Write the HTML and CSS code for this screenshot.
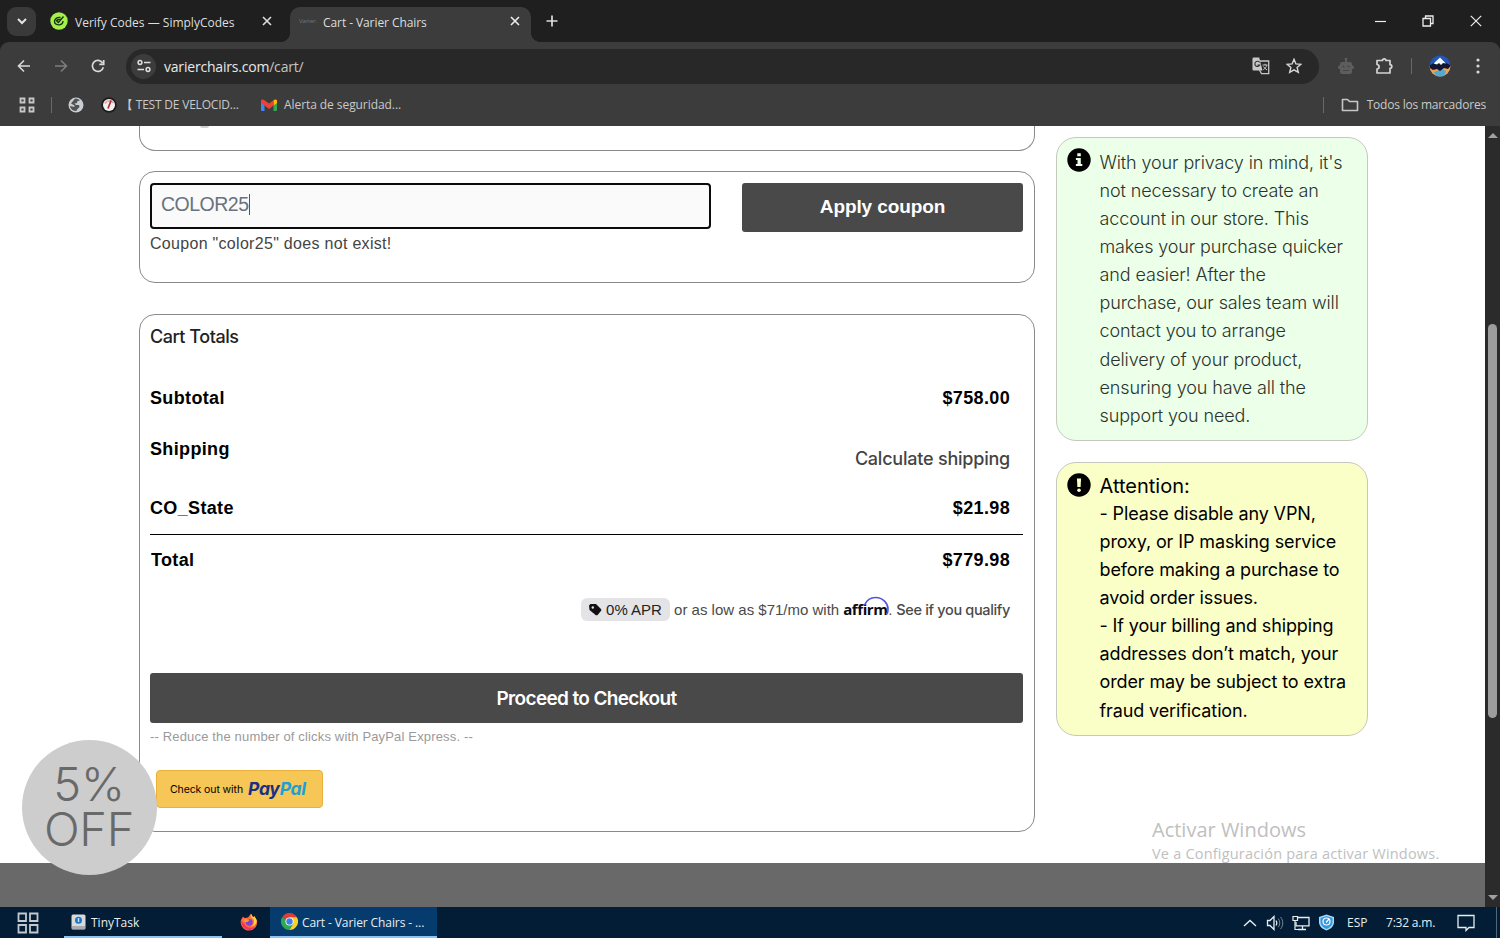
FILE: index.html
```html
<!DOCTYPE html>
<html lang="es">
<head>
  <meta charset="UTF-8" />
  <meta name="viewport" content="width=device-width, initial-scale=1" />
  <title>Cart - Varier Chairs</title>
  <link rel="stylesheet" href="styles.css">
</head>
<body>
  <!-- Tabs -->
  <div class="tab-strip">
    <button class="tab-search"><svg width="12" height="12" viewBox="0 0 12 12"><path d="M2 4l4 4 4-4" fill="none" stroke="#e3e3e3" stroke-width="2"/></svg></button>
    <div class="tab">
      <svg class="favicon-simply" width="18" height="18" viewBox="0 0 18 18"><circle cx="9" cy="9" r="8.7" fill="#a6f04a"/><path d="M10.500 5.500C7 5 4.500 7 4.500 9.500s2.500 3.500 5 3.300c2-.3 3.500-1.800 3.500-3.800M6.500 9.500c0-1.500 2-2.500 4-2M8 11l5.500-6.500M7 9l1.500 1.700" fill="none" stroke="#173518" stroke-width="1.400"/></svg>
      <span class="tab-title">Verify Codes — SimplyCodes</span>
      <svg class="close" width="10" height="10" viewBox="0 0 10 10"><path d="M1 1l8 8M9 1l-8 8" stroke="#dedede" stroke-width="1.600"/></svg>
    </div>
    <div class="tab active">
      <span class="favicon-text">Varier.</span>
      <span class="tab-title">Cart - Varier Chairs</span>
      <svg class="close" width="10" height="10" viewBox="0 0 10 10"><path d="M1 1l8 8M9 1l-8 8" stroke="#eee" stroke-width="1.600"/></svg>
    </div>
    <svg class="new-tab" width="12" height="12" viewBox="0 0 12 12"><path d="M6 .5v11M.5 6h11" stroke="#dedede" stroke-width="1.700"/></svg>
    <div class="window-buttons">
      <svg width="12" height="12" viewBox="0 0 12 12"><path d="M1 6.500h11" stroke="#eee" stroke-width="1.200"/></svg>
      <svg width="12" height="12" viewBox="0 0 12 12"><path d="M1 3.500h7.500V11H1zM3.500 3.500v-2.500h7.500v7.500H8.500" fill="none" stroke="#eee" stroke-width="1.300"/></svg>
      <svg width="12" height="12" viewBox="0 0 12 12"><path d="M.8.8l10.400 10.400M11.200.8L.8 11.200" stroke="#eee" stroke-width="1.200"/></svg>
    </div>
  </div>

  <!-- Address bar -->
  <div class="toolbar">
    <div class="nav-buttons">
      <svg width="14" height="14" viewBox="0 0 14 14"><path d="M13 7H1.500M7 1.500L1.500 7 7 12.500" fill="none" stroke="#d8d8d8" stroke-width="1.600"/></svg>
      <svg width="14" height="14" viewBox="0 0 14 14"><path d="M1 7h11.500M7 1.500L12.500 7 7 12.500" fill="none" stroke="#7d7d7d" stroke-width="1.600"/></svg>
      <svg width="14" height="14" viewBox="0 0 14 14"><path d="M12.300 8.200A5.500 5.500 0 1 1 11.600 4M12.700 1v4.300H8.300" fill="none" stroke="#d8d8d8" stroke-width="1.700"/></svg>
    </div>
    <div class="omnibox">
      <span class="site-info"><svg width="14" height="14" viewBox="0 0 14 14"><g fill="none" stroke="#dedede" stroke-width="1.500"><circle cx="3" cy="3.500" r="1.900"/><path d="M7 3.500h6.500M.5 10.500H7"/><circle cx="11" cy="10.500" r="1.900"/></g></svg></span>
      <span class="url">varierchairs.com<span>/cart/</span></span>
      <svg class="translate" width="18" height="18" viewBox="0 0 18 18"><path d="M8 4h8.700v12.700H9.500L7.500 13" fill="none" stroke="#c7c7c7" stroke-width="1.300"/><path d="M1.500.5h5.700l3.300 13H1.500a1 1 0 0 1-1-1v-11a1 1 0 0 1 1-1z" fill="#c7c7c7"/><path d="M7.700 5.500A2.600 2.600 0 1 0 7.800 8H5.500" fill="none" stroke="#333" stroke-width="1.200"/><path d="M10.500 8h5M13 6.800V8M14.800 8c-.3 2-2 3.800-3.500 4.700M11.500 9.500c.7 1.500 2 2.600 3.500 3.300" fill="none" stroke="#c7c7c7"/></svg>
      <svg width="16" height="16" viewBox="0 0 16 16"><path d="M8 1.300l1.900 4.600 5 .4-3.800 3.200 1.200 4.900L8 11.800l-4.300 2.600 1.200-4.900L1.100 6.300l5-.4z" fill="none" stroke="#d8d8d8" stroke-width="1.400"/></svg>
    </div>
    <svg class="robot" width="18" height="17" viewBox="0 0 18 17"><path d="M8 1.800a1.300 1.300 0 1 1 2 0V4h3a2 2 0 0 1 2 2v1.200a2 2 0 0 1 0 4V14a2 2 0 0 1-2 2H5a2 2 0 0 1-2-2v-2.800a2 2 0 0 1 0-4V6a2 2 0 0 1 2-2h3z" fill="#5d5d5d"/><circle cx="6.500" cy="8.500" r="1.100" fill="#474747"/><circle cx="11.500" cy="8.500" r="1.100" fill="#474747"/><path d="M6 12.500h6" stroke="#474747"/></svg>
    <svg class="puzzle" width="19" height="18" viewBox="0 0 19 18"><path d="M2 3.500h5.500a1.700 1.700 0 0 1 3.400 0H15v4.200a1.800 1.800 0 0 1 0 3.600V16H2v-4c2.800-.3 2.800-4.200 0-4.500z" fill="none" stroke="#d4d4d4" stroke-width="1.700" stroke-linejoin="round"/></svg>
    <span class="divider"></span>
    <svg class="avatar" width="22" height="22" viewBox="0 0 22 22"><defs><clipPath id="avatar-clip"><circle cx="11" cy="11" r="10.500"/></clipPath></defs><g clip-path="url(#avatar-clip)"><path fill="#2356b8" d="M0 0h22v22H0z"/><path fill="#f0a44f" d="M0 11h22v11H0z"/><path fill="#55a8d2" d="M5 17l8-3 4 2-2 6H7z"/><path fill="#111633" d="M0 11l6-4h9l7 3.500-3 3.500-4-1-4 3-3-2-4 1-3-2z"/><path fill="#f5f7ff" d="M4.500 8.500l6.500-6 6 6-3-.5-2 2-2-2-2 1.500z"/></g></svg>
    <svg class="kebab" width="4" height="16" viewBox="0 0 4 16"><g fill="#d8d8d8"><circle cx="2" cy="2" r="1.600"/><circle cx="2" cy="8" r="1.600"/><circle cx="2" cy="14" r="1.600"/></g></svg>
  </div>

  <!-- Bookmarks -->
  <div class="bookmarks">
    <svg class="apps" width="16" height="16" viewBox="0 0 16 16"><path d="M1.500 1.500h4v4h-4zM10.500 1.500h4v4h-4zM1.500 10.500h4v4h-4zM10.500 10.500h4v4h-4z" fill="none" stroke="#c7c7c7" stroke-width="1.800"/></svg>
    <span class="divider"></span>
    <svg class="globe" width="16" height="16" viewBox="0 0 16 16"><circle cx="8" cy="8" r="7.500" fill="#c9ccd0"/><path d="M7 1.500c2 0 4 .8 5 2L9.500 4 9 6 6.500 6.500 8 8h3l.5 2L9 12.500 8.500 14C5 14 2.500 12 1.800 9l4.700 1V8.500L3 6.500z" fill="#3c3c3c" opacity=".85"/></svg>
    <svg class="gauge" width="16" height="16" viewBox="0 0 16 16"><circle cx="8" cy="8" r="7.800" fill="#1c1c1c"/><circle cx="8" cy="8" r="6" fill="#f1f1f1"/><path d="M4 6.500A5 5 0 0 1 12.500 6" fill="none" stroke="#e7a8a4" stroke-width="2"/><path d="M7 11.500L10 3.500" stroke="#b3262e" stroke-width="1.700"/></svg>
    <span class="bookmark speed">【 TEST DE VELOCID...</span>
    <svg class="gmail" width="16" height="12" viewBox="0 0 16 12"><path fill="#4285f4" d="M0 2h3.500v10H1a1 1 0 0 1-1-1z"/><path fill="#34a853" d="M12.500 2H16v9a1 1 0 0 1-1 1h-2.500z"/><path fill="#fbbc04" d="M12.500 1.200C14 0 16 .3 16 2v2l-3.500 2.500z"/><path fill="#ea4335" d="M0 2C0 .3 2 0 3.500 1.200L8 4.600l4.500-3.400v5.300L8 10 3.500 6.500 0 4z"/></svg>
    <span class="bookmark alert">Alerta de seguridad...</span>
    <span class="divider right"></span>
    <svg class="folder" width="18" height="14" viewBox="0 0 18 14"><path d="M1.500 1.500h5l2 2h8v9h-15z" fill="none" stroke="#c7c7c7" stroke-width="1.600" stroke-linejoin="round"/></svg>
    <span class="bookmark all">Todos los marcadores</span>
  </div>

  <div class="viewport">
    <div class="page">
      <main class="cart-layout">
        <div class="cart-main">
          <section class="card cart-items"><span class="scrap"></span></section>

          <section class="card coupon">
            <div class="coupon-field">
              <div class="coupon-input">COLOR25<span class="caret"></span></div>
              <p class="coupon-error">Coupon "color25" does not exist!</p>
            </div>
            <button class="btn apply">Apply coupon</button>
          </section>

          <section class="card totals">
            <h2>Cart Totals</h2>
            <div class="row subtotal"><span>Subtotal</span><span>$758.00</span></div>
            <div class="row shipping"><span>Shipping</span><a>Calculate shipping</a></div>
            <div class="row tax"><span>CO_State</span><span>$21.98</span></div>
            <div class="row total"><span>Total</span><span>$779.98</span></div>
            <div class="financing">
              <span class="apr"><svg width="14" height="13" viewBox="0 0 14 13"><path d="M1 2.500L2.500 1H8l4.500 4.500a2 2 0 0 1 0 3L10 11.500a2 2 0 0 1-3 0L1.500 7z" fill="#101114"/><circle cx="4.800" cy="4.500" r="1.200" fill="#e4e4e6"/></svg><span>0% APR</span></span>
              <span class="monthly">or as low as $71/mo with</span>
              <span class="affirm">affirm<svg width="28" height="20" viewBox="0 0 28 20"><path d="M1.500 9C4 3.500 8 1.500 12.500 1.500 20 1.500 25 7.500 25 13c0 3-.6 5-2 5" fill="none" stroke="#5453dc" stroke-width="1.600"/></svg></span>
              <span class="dot">.</span>
              <a class="qualify">See if you qualify</a>
            </div>
            <button class="btn checkout">Proceed to Checkout</button>
            <p class="express-note">-- Reduce the number of clicks with PayPal Express. --</p>
            <button class="paypal"><span class="paypal-text">Check out with</span><span class="paypal-logo">Pay<span>Pal</span></span></button>
          </section>
        </div>

        <aside class="notices">
          <section class="notice privacy">
            <svg width="24" height="24" viewBox="0 0 24 24"><circle cx="12" cy="12" r="11.700"/><path d="M10.300 5.300h3.500v3h-3.500zM8.900 10h4.900v6h1.500v2H8.900v-2h1.600v-4H8.900z" fill="#ebffe9"/></svg>
            <p>With your privacy in mind, it's<br>not necessary to create an<br>account in our store. This<br>makes your purchase quicker<br>and easier! After the<br>purchase, our sales team will<br>contact you to arrange<br>delivery of your product,<br>ensuring you have all the<br>support you need.</p>
          </section>
          <section class="notice attention">
            <svg width="24" height="24" viewBox="0 0 24 24"><circle cx="12" cy="12" r="11.700"/><path d="M9.900 5.500h4.200l-.5 8.500h-3.200z" fill="#faffc8"/><circle cx="12" cy="17.300" r="1.800" fill="#faffc8"/></svg>
            <div>
              <h3>Attention:</h3>
              <p>- Please disable any VPN,<br>proxy, or IP masking service<br>before making a purchase to<br>avoid order issues.<br>- If your billing and shipping<br>addresses don’t match, your<br>order may be subject to extra<br>fraud verification.</p>
            </div>
          </section>
        </aside>
      </main>
      <footer class="page-footer"></footer>
      <div class="discount-badge">5%<br>OFF</div>
      <div class="watermark">
        <p class="watermark-title">Activar Windows</p>
        <p class="watermark-text">Ve a Configuración para activar Windows.</p>
      </div>
    </div>
    <div class="scrollbar">
      <span class="arrow-up"></span>
      <span class="thumb"></span>
      <span class="arrow-down"></span>
    </div>
  </div>

  <!-- Windows taskbar -->
  <div class="taskbar">
    <div class="start"><svg width="22" height="22" viewBox="0 0 22 22"><path d="M1.500 1.500h7.500v7.500H1.500zM13 1.500h7.500v7.500H13zM1.500 13h7.500v7.500H1.500zM13 13h7.500v7.500H13z" fill="none" stroke="#c3c9ce" stroke-width="1.800"/></svg></div>
    <div class="task tiny">
      <svg width="15" height="16" viewBox="0 0 15 16"><rect x=".5" y=".5" width="14" height="15" rx="1.500" fill="#dadada"/><path d="M1 12h13v3H1z" fill="#a9abae"/><circle cx="7.500" cy="6.300" r="3.500" fill="#1877c9"/><path d="M7.500 4v4" stroke="#bfe2ff" stroke-width="1.500"/></svg>
      <span>TinyTask</span>
    </div>
    <div class="firefox"><svg width="18" height="18" viewBox="0 0 18 18"><path d="M9 17.500A8.300 8.300 0 0 1 1 7l2-3.500L4.500 5 8 4.500 11 .8l2 3.400 1.500-1L17 7.500A8.300 8.300 0 0 1 9 17.500z" fill="#ff6b3d"/><path d="M11 .8c-1 3 .5 4 2 5s1.500 6-2 7.500c3.500 0 5.700-3 5.700-6L14.500 3.200l-1.500 1z" fill="#ffd23e"/><path d="M1 8c0 5 4 9 8 9 3 0 5-1.500 6.500-3.500-4 2.500-9 1.500-11-2.500z" fill="#f5365c"/><circle cx="9.300" cy="9.300" r="3.400" fill="#7b43d6"/><path d="M3.500 6.500c2-1 3.500-.5 6 .5L7.500 9H5z" fill="#ff9a2e"/></svg></div>
    <div class="task chrome">
      <svg width="17" height="17" viewBox="0 0 18 18"><path d="M9 9L1.200 4.500a9 9 0 0 1 15.600 0z" fill="#e33b2e"/><path d="M9 9L1.200 4.500A9 9 0 0 0 9 18l3.500-6z" fill="#2da94f"/><path d="M9 4.500h7.800A9 9 0 0 1 9 18l4-7z" fill="#fdd024"/><circle cx="9" cy="9" r="4.300" fill="#fff"/><circle cx="9" cy="9" r="3.400" fill="#3d7fee"/></svg>
      <span>Cart - Varier Chairs - ...</span>
    </div>
    <div class="tray">
      <svg class="tray-up" width="14" height="8" viewBox="0 0 14 8"><path d="M1 7l6-5.500L13 7" fill="none" stroke="#e8edf1" stroke-width="1.400"/></svg>
      <svg class="volume" width="18" height="16" viewBox="0 0 18 16"><path d="M1.500 5.500H4l4-4v13l-4-4H1.500z" fill="none" stroke="#e8edf1" stroke-width="1.300"/><path d="M10 5.500c1 1.500 1 3.500 0 5" fill="none" stroke="#e8edf1" stroke-width="1.200"/><path d="M12.300 3.700c2 2.500 2 6 0 8.500M14.500 2c3 3.500 3 8.500 0 12" fill="none" stroke="#798a9a"/></svg>
      <svg class="network" width="18" height="16" viewBox="0 0 18 16"><path d="M6 2.500h11v8.300H4V7M10.500 11v3.500M6 14.500h8" fill="none" stroke="#e8edf1" stroke-width="1.300"/><path d="M1 1.500h4.500v4H1zM3 5.500v9h3" fill="none" stroke="#e8edf1" stroke-width="1.200"/></svg>
      <svg class="shield" width="17" height="17" viewBox="0 0 17 17"><path d="M8.500.5L16 3v5c0 4-3 7-7.500 8.500C4 15 1 12 1 8V3z" fill="#a8dcfb"/><path d="M8.500 2L14.500 4v4c0 3-2.500 5.500-6 7-3.500-1.500-6-4-6-7V4z" fill="#3196e0"/><circle cx="8.500" cy="7.500" r="3.500" fill="none" stroke="#fff" stroke-width="1.200"/><path d="M8 8.500l3-3.500" stroke="#fff" stroke-width="1.200"/></svg>
      <span class="lang">ESP</span>
      <span class="clock">7:32 a.m.</span>
      <svg class="notifications" width="18" height="18" viewBox="0 0 18 18"><path d="M1 1.500h16v12h-5l-3 3v-3H1z" fill="none" stroke="#e8edf1" stroke-width="1.300"/></svg>
    </div>
  </div>
</body>
</html>
```
FILE: styles.css
```css
* {
  box-sizing: border-box;
}

body {
  margin: 0;
  width: 1500px;
  height: 938px;
  overflow: hidden;
  display: flex;
  flex-direction: column;
  background: #1f1f1f;
  font-family: "Open Sans", "Noto Sans", sans-serif;
  color: #000;
}

h2, h3, p {
  margin: 0;
}

svg {
  flex: none;
  display: block;
}

button {
  border: none;
  padding: 0;
}

/* Tab strip */
.tab-strip {
  height: 42px;
  flex: none;
  display: flex;
  align-items: center;
  background: #1f1f1f;
  color: #dedede;
  font-size: 12px;
}

.tab-search {
  width: 29px;
  height: 29px;
  margin-left: 7px;
  border-radius: 9px;
  background: #3a3a3a;
  display: flex;
  align-items: center;
  justify-content: center;
}

.tab {
  width: 254px;
  height: 34px;
  display: flex;
  align-items: center;
  padding: 0 18px 0 14px;
}

.tab-title {
  margin-left: 7px;
  padding-top: 2px;
  white-space: nowrap;
}

.tab .close {
  margin-left: auto;
}

.tab.active {
  width: 241px;
  height: 35px;
  margin-top: 7px;
  padding: 0 11px 7px 9px;
  background: #3c3c3c;
  border-radius: 10px 10px 0 0;
  position: relative;
}

.active .tab-title {
  letter-spacing: -0.08px;
}

/* flared feet of the active tab */
.tab.active::before,
.tab.active::after {
  content: "";
  position: absolute;
  bottom: 0;
  width: 10px;
  height: 10px;
}

.tab.active::before {
  left: -10px;
  background: radial-gradient(circle at 0 0, #1f1f1f 10px, #3c3c3c 10.500px);
}

.tab.active::after {
  right: -10px;
  background: radial-gradient(circle at 100% 0, #1f1f1f 10px, #3c3c3c 10.500px);
}

.favicon-text {
  width: 17px;
  font-size: 6px;
  color: #777;
}

.new-tab {
  margin-left: 15px;
}

.window-buttons {
  display: flex;
  gap: 36px;
  margin-left: auto;
  padding-right: 18px;
}

/* Toolbar */
.toolbar {
  height: 48px;
  flex: none;
  display: flex;
  align-items: center;
  background: #3c3c3c;
  border-radius: 9px 9px 0 0;
}

.nav-buttons {
  width: 126px;
  display: flex;
  gap: 23px;
  padding-left: 17px;
}

.omnibox {
  width: 1193px;
  height: 35px;
  border-radius: 18px;
  background: #282828;
  display: flex;
  align-items: center;
  padding: 0 17px 0 5px;
}

.site-info {
  width: 25px;
  height: 25px;
  border-radius: 50%;
  background: #3c3c3c;
  display: flex;
  align-items: center;
  justify-content: center;
}

.url {
  margin-left: 8px;
  color: #e8e8e8;
  font-size: 14px;
  letter-spacing: -0.2px;
}

.url span {
  color: #c4c4c4;
}

.translate {
  margin: 0 16px 0 auto;
}

.robot {
  margin-left: 18px;
}

.puzzle {
  margin-left: 20px;
}

.divider {
  width: 1px;
  height: 16px;
  background: #686868;
}

.toolbar .divider {
  margin-left: 17px;
}

.avatar {
  margin-left: 17px;
}

.kebab {
  margin-left: 25px;
}

/* Bookmarks bar */
.bookmarks {
  height: 36px;
  flex: none;
  display: flex;
  align-items: center;
  padding: 0 14px 7px 19px;
  background: #3c3c3c;
  color: #c9c9c9;
  font-size: 12px;
}

.bookmarks .divider {
  margin-left: 16px;
}

.globe {
  margin-left: 16px;
}

.gauge {
  margin-left: 17px;
}

.bookmark {
  white-space: nowrap;
}

.speed {
  width: 125px;
  margin-left: 4px;
  letter-spacing: -0.2px;
}

.gmail {
  margin-left: 15px;
}

.alert {
  margin-left: 7px;
  letter-spacing: -0.07px;
}

.all {
  letter-spacing: -0.2px;
}

.bookmarks .divider.right {
  margin-left: auto;
}

.folder {
  margin: 0 8px 0 17px;
}

/* Visible part of the page */
.viewport {
  height: 781px;
  flex: none;
  display: flex;
  background: #fff;
}

.page {
  width: 1485px;
  position: relative;
  overflow: hidden;
}

.cart-layout {
  height: 737px;
  display: flex;
  gap: 21px;
  padding-left: 139px;
}

.cart-main {
  width: 896px;
}

.card {
  border: 1px solid #8a8a8a;
  border-radius: 16px;
  background: #fff;
}

.cart-items {
  height: 25px;
  border-top: none;
  border-radius: 0 0 16px 16px;
}

.scrap {
  display: block;
  width: 9px;
  height: 2px;
  margin-left: 60px;
  border-radius: 0 0 6px 6px;
  background: #d2d2d2;
}

.coupon {
  height: 112px;
  margin-top: 20px;
  padding: 11px 11px 11px 10px;
  display: flex;
  justify-content: space-between;
}

.coupon-field {
  width: 561px;
  font-family: "Liberation Sans", Arial, sans-serif;
}

.coupon-input {
  height: 46px;
  border: 2px solid #0b0b0b;
  border-radius: 4px;
  background: #fafafa;
  color: #69727d;
  font-size: 19.500px;
  letter-spacing: -0.5px;
  line-height: 39px;
  padding-left: 9px;
  display: flex;
}

.caret {
  width: 1px;
  height: 21px;
  margin-top: 9px;
  background: #555;
}

.coupon-error {
  margin-top: 5px;
  color: #444;
  font-size: 16px;
  line-height: 20px;
  letter-spacing: 0.3px;
}

.btn {
  border-radius: 3px;
  background: #494949;
  color: #fff;
  font-weight: bold;
}

.apply {
  width: 281px;
  height: 49px;
  padding-bottom: 2px;
  font-family: "Liberation Sans", Arial, sans-serif;
  font-size: 19px;
  letter-spacing: -0.1px;
}

/* Totals */
.totals {
  height: 518px;
  margin-top: 31px;
  padding: 11px 11px 0 10px;
}

.totals h2 {
  height: 47px;
  font-family: Inter, sans-serif;
  font-size: 18px;
  font-weight: 500;
  line-height: 22px;
  letter-spacing: -0.45px;
  color: #222;
}

.row {
  display: flex;
  justify-content: space-between;
  padding-right: 13px;
  font-family: "Liberation Sans", Arial, sans-serif;
  font-size: 18px;
  font-weight: bold;
  letter-spacing: 0.35px;
}

.subtotal {
  height: 50px;
  line-height: 50px;
}

.shipping {
  height: 62px;
  line-height: 52px;
}

.shipping a {
  font-family: Inter, sans-serif;
  font-weight: 500;
  line-height: 72px;
  letter-spacing: -0.22px;
  color: #444;
}

.tax {
  height: 50px;
  line-height: 47px;
  border-bottom: 1px solid #000;
  padding-right: 0;
}

.tax span:last-child {
  margin-right: 13px;
}

.total {
  height: 49px;
  padding-left: 1px;
  line-height: 51px;
}

.financing {
  height: 52px;
  display: flex;
  align-items: center;
  justify-content: flex-end;
  padding: 0 13px 2px 0;
  font-family: "Liberation Sans", Arial, sans-serif;
  font-size: 15px;
  color: #4a4a4a;
}

.apr {
  width: 89px;
  height: 23px;
  margin-right: 4px;
  padding-left: 7px;
  border-radius: 6px;
  background: #e4e4e6;
  display: flex;
  align-items: center;
  gap: 4px;
  color: #222;
}

.affirm {
  position: relative;
  width: 45px;
  margin-left: 4px;
  font-family: "Open Sans", sans-serif;
  font-size: 15px;
  font-weight: 700;
  letter-spacing: -0.4px;
  line-height: 20px;
  color: #0b0b14;
}

.affirm svg {
  position: absolute;
  left: 20px;
  top: -3px;
}

.qualify {
  margin-left: 4px;
  font-family: Inter, sans-serif;
  font-size: 14.500px;
  font-weight: 500;
  letter-spacing: -0.34px;
}

.checkout {
  display: block;
  width: 100%;
  height: 50px;
  margin-top: 37px;
  font-family: Inter, sans-serif;
  font-size: 19px;
  font-weight: 600;
  letter-spacing: -0.64px;
}

.express-note {
  height: 47px;
  font-family: "Liberation Sans", Arial, sans-serif;
  font-size: 13px;
  line-height: 27px;
  letter-spacing: 0.16px;
  color: #9a9a9a;
}

.paypal {
  width: 167px;
  height: 38px;
  margin-left: 6px;
  border: 1px solid #e9b13c;
  border-radius: 4px;
  background: #f6c657;
  display: flex;
  align-items: center;
  padding: 0 0 1px 13px;
}

.paypal-text {
  width: 78px;
  padding-top: 1px;
  font-family: Inter, sans-serif;
  font-size: 10.500px;
  letter-spacing: -0.1px;
  text-align: left;
  white-space: nowrap;
}

.paypal-logo {
  font-family: Inter, sans-serif;
  font-size: 17.500px;
  font-style: italic;
  font-weight: 700;
  letter-spacing: -0.3px;
  color: #1b2f86;
}

.paypal-logo span {
  color: #1ba0dc;
}

/* Side notices */
.notices {
  width: 312px;
  padding-top: 11px;
}

.notice {
  display: flex;
  gap: 9px;
  padding: 10px 0 0 10px;
  border: 1px solid #c5c9bd;
  border-radius: 20px;
  font-family: Inter, sans-serif;
  font-size: 18px;
  line-height: 28.150px;
  letter-spacing: -0.12px;
  white-space: nowrap;
}

.notice svg {
  margin-left: -0.5px;
}

.notice p {
  padding-top: 0.5px;
}

.privacy {
  height: 304px;
  background: #ebffe9;
  color: #2c332c;
  font-weight: 300;
}

.attention {
  height: 274px;
  margin-top: 21px;
  background: #faffc8;
}

.attention h3 {
  font-size: 20px;
  font-weight: 400;
  line-height: 26px;
  letter-spacing: 0;
}

/* Floating elements */
.page-footer {
  height: 44px;
  background: #696969;
}

.discount-badge {
  position: absolute;
  left: 21.500px;
  top: 613.500px;
  width: 135px;
  height: 135px;
  padding-top: 21px;
  border-radius: 50%;
  background: #cdcdcd;
  color: #696969;
  font-family: Inter, sans-serif;
  font-size: 47px;
  font-weight: 300;
  line-height: 45.500px;
  letter-spacing: -0.3px;
  text-align: center;
}

.watermark {
  position: absolute;
  left: 1152px;
  top: 690px;
  color: #c0c0c0;
  white-space: nowrap;
}

.watermark-title {
  font-size: 20px;
  line-height: 28px;
}

.watermark-text {
  font-size: 14.500px;
  line-height: 19px;
  letter-spacing: 0.2px;
}

/* Scrollbar */
.scrollbar {
  width: 15px;
  background: #2b2b2b;
  display: flex;
  flex-direction: column;
  align-items: center;
}

.arrow-up,
.arrow-down {
  border: 5px solid transparent;
}

.arrow-up {
  margin-top: 2px;
  border-bottom-color: #a0a0a0;
}

.arrow-down {
  margin: auto 0 2px;
  border-top-color: #a0a0a0;
}

.thumb {
  width: 9px;
  height: 394px;
  margin-top: 186px;
  border-radius: 5px;
  background: #9d9d9d;
}

/* Taskbar */
.taskbar {
  height: 31px;
  flex: none;
  display: flex;
  background: #021d35;
  color: #e8edf1;
  font-size: 12px;
  line-height: 31px;
}

.start {
  width: 64px;
  padding: 5px 0 0 17px;
}

.task {
  display: flex;
  align-items: center;
  border-bottom: 2px solid #8fc4ee;
  white-space: nowrap;
}

.task span {
  padding-top: 1px;
}

.tiny {
  width: 158px;
  padding-left: 7px;
  gap: 5px;
}

.firefox {
  width: 48px;
  padding: 6px 0 0 18px;
}

.chrome {
  width: 167px;
  padding-left: 11px;
  gap: 4px;
  background: #053c6d;
  letter-spacing: -0.1px;
}

.tray {
  display: flex;
  align-items: center;
  margin-left: auto;
  margin-right: 3px;
  padding-right: 21px;
  border-right: 1px solid #52677a;
}

.volume {
  margin-left: 9px;
}

.network {
  margin-left: 8px;
}

.shield {
  margin-left: 8px;
}

.lang {
  width: 39px;
  margin-left: 12px;
}

.clock {
  width: 71px;
  letter-spacing: -0.2px;
}
```
